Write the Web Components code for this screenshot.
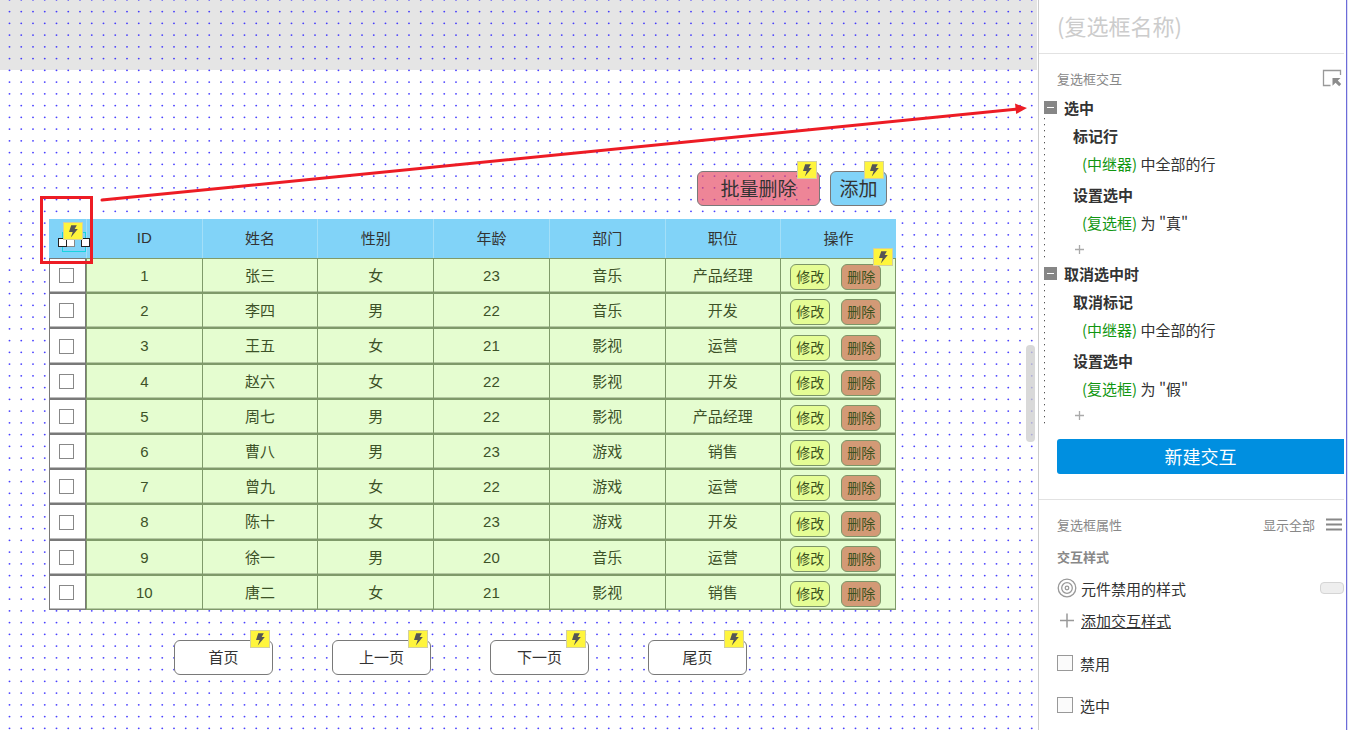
<!DOCTYPE html>
<html lang="zh-CN">
<head>
<meta charset="utf-8">
<title>复选框交互</title>
<style>
  body { margin: 0; background: #fff; color: #333; font-family: "Liberation Sans", "Noto Sans CJK SC", sans-serif; font-size: 15px; }
</style>
</head>
<body>
<proto-editor></proto-editor>
<script>
const define = (name, html, setup) => {
  const template = document.createElement('template');
  template.innerHTML = html;
  customElements.define(name, class extends HTMLElement {
    connectedCallback() {
      if (this.shadowRoot) return;
      this.attachShadow({ mode: 'open' }).append(template.content.cloneNode(true));
      if (setup) setup(this, this.shadowRoot);
    }
  });
};

define('bolt-badge', `
<style>
  :host { display: block; box-sizing: border-box; width: 20px; height: 18px; border: 1px solid #d3d0a0; background: #fff53d; }
  svg { display: block; width: 18px; height: 16px; }
</style>
<svg viewBox="0 0 18 16" aria-hidden="true"><path d="M7.200 2.200h5.600L10.700 6h3.100L6.800 14.500l1.900-5.600H5z" fill="#555"/></svg>`);

define('canvas-button', `
<style>
  :host { display: block; position: relative; width: 99px; height: 35px; }
  button { display: block; box-sizing: border-box; width: 100%; height: 100%; padding: 0 0 2px; border: 1px solid #797979; border-radius: 6px; background: #fff; color: #333; font: inherit; }
  bolt-badge { position: absolute; top: -10px; right: 3px; }
  :host([kind=danger]) { width: 123px; font-size: 19px; }
  :host([kind=danger]) button { background: #e5435fa6; }
  :host([kind=add]) { width: 57px; font-size: 19px; }
  :host([kind=add]) button { background: #81d3f8; }
</style>
<button type="button"><slot></slot></button><bolt-badge></bolt-badge>`);

define('row-button', `
<style>
  :host { display: block; width: 40px; height: 26px; }
  button { display: block; box-sizing: border-box; width: 100%; height: 100%; padding: 0; border: 1px solid #7d9668; border-radius: 6px; background: #e5fd95; color: #3c5220; font: inherit; font-size: 14px; line-height: 24px; }
  :host([kind=delete]) button { background: #d39a76; }
</style>
<button type="button"><slot></slot></button>`);

define('selected-checkbox', `
<style>
  :host { display: block; position: relative; width: 22px; height: 18px; border: 1px solid #19d3e0; }
  bolt-badge { position: absolute; left: 0; top: -11px; }
  input { appearance: none; position: absolute; left: 3px; top: 5px; margin: 0; box-sizing: border-box; width: 9px; height: 9px; border: 1px solid #888; background: #fff; }
  i { position: absolute; top: 5px; box-sizing: border-box; width: 9px; height: 9px; border: 1px solid #222; background: #fff; }
  .w { left: -5px; } .e { right: -5px; }
</style>
<input type="checkbox" aria-label="全选"><i class="w"></i><i class="e"></i><bolt-badge></bolt-badge>`);

define('staff-table', `
<style>
  :host { display: block; position: relative; }
  table { width: 100%; table-layout: fixed; border-collapse: separate; border-spacing: 0; }
  th, td { box-sizing: border-box; padding: 0; text-align: center; font-weight: normal; }
  th { height: 39px; padding-bottom: 2px; background: #81d3f8; border-left: 1px solid #a3dff8; }
  th:first-child { width: 37px; border-left: 0; padding: 0; }
  selected-checkbox { margin: 6px 0 0 13px; }
  td { height: 35px; background: #e5fdd0; color: #3d5228; border: 1px solid #7f9a6a; border-right-width: 0; line-height: 32px; box-shadow: inset 0 -1px #b5cba2; }
  tbody tr:nth-child(5n+3) td { height: 36px; }
  td:first-child { background: #fff; border-color: #797979; border-right: 1px solid #797979; box-shadow: inset 0 -1px #bbb; }
  td:last-child { border-right-width: 1px; }
  td input { appearance: none; display: block; box-sizing: border-box; width: 15px; height: 15px; margin: 0 0 0 9px; border: 1px solid #888; background: #fff; }
  .ops { display: flex; gap: 11px; padding: 3px 0 0 9px; }
  .rowmark { position: absolute; right: 3px; top: 29px; }
</style>
<table>
  <thead><tr><th><selected-checkbox></selected-checkbox></th><th>ID</th><th>姓名</th><th>性别</th><th>年龄</th><th>部门</th><th>职位</th><th>操作</th></tr></thead>
  <tbody></tbody>
</table>
<bolt-badge class="rowmark"></bolt-badge>`, (host, root) => {
  const rows = [
    ['1', '张三', '女', '23', '音乐', '产品经理'], ['2', '李四', '男', '22', '音乐', '开发'],
    ['3', '王五', '女', '21', '影视', '运营'], ['4', '赵六', '女', '22', '影视', '开发'],
    ['5', '周七', '男', '22', '影视', '产品经理'], ['6', '曹八', '男', '23', '游戏', '销售'],
    ['7', '曾九', '女', '22', '游戏', '运营'], ['8', '陈十', '女', '23', '游戏', '开发'],
    ['9', '徐一', '男', '20', '音乐', '运营'], ['10', '唐二', '女', '21', '影视', '销售']
  ];
  root.querySelector('tbody').innerHTML = rows.map(r => `<tr><td><input type="checkbox" aria-label="选择${r[1]}"></td>${r.map(c => `<td>${c}</td>`).join('')}<td><div class="ops"><row-button>修改</row-button><row-button kind="delete">删除</row-button></div></td></tr>`).join('');
});

define('design-canvas', `
<style>
  :host { display: block; position: relative; overflow: hidden; min-width: 0; }
  .dots { position: absolute; inset: 0; width: 100%; height: 100%; }
  .content { position: relative; }
  .offpage { height: 70px; }
  .shade { position: absolute; inset: 0 1px auto 0; height: 70px; background: #e5e5e5; }
  .work { padding: 101px 142px 0 49px; }
  .tools { display: flex; justify-content: flex-end; gap: 10px; padding: 0 9px 13px 0; }
  .pager { display: flex; gap: 59px; padding: 30px 0 0 125px; }
  .mark { position: absolute; left: 40px; top: 196px; box-sizing: border-box; width: 53px; height: 68px; border: 3px solid #ed1c24; }
  .arrow { position: absolute; left: 0; top: 0; width: 1038px; height: 220px; }
  .thumb { position: absolute; right: 3px; top: 345px; width: 9px; height: 97px; border-radius: 4px; background: #ccccccc0; }
</style>
<div class="shade"></div>
<svg class="dots" aria-hidden="true"><defs><pattern id="grid" x="3" y="6" width="47" height="47" patternUnits="userSpaceOnUse"></pattern></defs><rect width="100%" height="100%" fill="url(#grid)"/></svg>
<div class="content">
  <div class="offpage"></div>
  <div class="work">
    <div class="tools"><canvas-button kind="danger">批量删除</canvas-button><canvas-button kind="add">添加</canvas-button></div>
    <staff-table></staff-table>
    <div class="pager"><canvas-button>首页</canvas-button><canvas-button>上一页</canvas-button><canvas-button>下一页</canvas-button><canvas-button>尾页</canvas-button></div>
  </div>
</div>
<div class="mark"></div>
<svg class="arrow" viewBox="0 0 1038 220" aria-hidden="true"><path d="M102 200L1018 109" stroke="#ed1c24" stroke-width="3" stroke-linecap="round"/><path d="M1027 108L1015 103.500L1016.200 114z" fill="#ed1c24"/></svg>
<div class="thumb"></div>`, (host, root) => {
  const pattern = root.querySelector('pattern');
  const svg = 'http://www.w3.org/2000/svg';
  for (let row = 0; row < 4; row++) for (let col = 0; col < 4; col++) {
    const dot = document.createElementNS(svg, 'circle');
    dot.setAttribute('cx', 6.5 + col * 11.75);
    dot.setAttribute('cy', 5.6 + row * 11.75);
    dot.setAttribute('r', 0.95);
    dot.setAttribute('fill', '#2a20ff');
    dot.setAttribute('fill-opacity', 0.85);
    pattern.append(dot);
  }
});

define('event-case', `
<style>
  :host { display: block; position: relative; }
  .event { display: flex; align-items: center; height: 28px; gap: 7px; font-weight: bold; }
  .toggle { width: 13px; height: 13px; padding: 0; border: 0; background: #868686; display: grid; place-items: center; }
  .toggle i { width: 7px; height: 1px; background: #fff; }
  .rail { position: absolute; left: 0; top: 25px; bottom: -1px; width: 1px; background: repeating-linear-gradient(#555 0 1px, #ccc 1px 2px, transparent 2px 6px); }
  .add { display: block; height: 20px; width: 11px; margin-left: 30px; padding: 0; border: 0; background: none; }
  svg { display: block; width: 11px; height: 11px; }
</style>
<div class="event"><button class="toggle" type="button" aria-label="折叠"><i></i></button><slot name="event"></slot></div>
<div class="rail"></div>
<slot></slot>
<button class="add" type="button" aria-label="添加动作"><svg viewBox="0 0 11 11"><path d="M5.500 1v9M1 5.500h9" stroke="#aaa" stroke-width="1.300" fill="none"/></svg></button>`);

define('action-item', `
<style>
  :host { display: block; padding: 0 0 3px 29px; }
  .name { line-height: 30px; font-weight: bold; }
  .detail { line-height: 26px; padding-left: 9px; }
  ::slotted([slot=target]) { color: #119611; }
</style>
<div class="name"><slot name="name"></slot></div>
<div class="detail"><slot name="target"></slot> <slot></slot></div>`);

define('check-field', `
<style>
  :host { display: block; }
  label { display: flex; align-items: center; gap: 7px; height: 42px; }
  input { appearance: none; box-sizing: border-box; width: 16px; height: 16px; margin: 0; border: 1px solid #999; background: #fbfbfb; }
</style>
<label><input type="checkbox"><slot></slot></label>`);

define('inspector-panel', `
<style>
  :host { display: block; box-sizing: border-box; border-left: 1px solid #ccc; border-right: 1px solid #dcdcf6; box-shadow: inset -1px 0 #6c6cd8; padding-right: 3px; background: #fff; font-family: "Noto Sans CJK SC", sans-serif; }
  header { height: 53px; border-bottom: 1px solid #e2e2e2; }
  header input { display: block; box-sizing: border-box; width: 100%; height: 53px; padding: 0 0 4px 18px; border: 0; background: none; font: inherit; font-size: 22px; color: #333; }
  header input::placeholder { color: #ccc; opacity: 1; }
  .row { display: flex; align-items: center; justify-content: space-between; color: #888; font-size: 13px; padding: 0 2px 0 18px; }
  .first { height: 30px; padding-top: 9px; }
  .second { height: 48px; }
  .cases { padding-left: 5px; }
  .more { display: flex; align-items: center; gap: 11px; }
  svg { display: block; }
  .new { display: block; width: calc(100% - 18px); height: 35px; margin: 14px 0 25px 18px; padding: 0 0 2px; border: 0; border-radius: 3px 0 0 3px; background: #008fe0; color: #fff; font: inherit; font-size: 18px; }
  hr { height: 1px; margin: 0; border: 0; background: #e2e2e2; }
  h3 { margin: 0 0 6px 18px; font-size: 13px; line-height: 18px; color: #888; }
  .item { display: flex; align-items: center; gap: 4px; height: 32px; padding-left: 18px; }
  .item svg { flex: none; }
  .pill { box-sizing: border-box; width: 24px; height: 12px; margin-left: auto; padding: 0; border: 1px solid #d5d5d5; border-radius: 4px; background: #eee; }
  a { color: #333; text-decoration: underline; }
  .checks { padding: 6px 0 0 18px; }
</style>
<header><input type="text" placeholder="(复选框名称)" aria-label="名称"></header>
<div class="row first"><span>复选框交互</span><svg width="20" height="18" viewBox="0 0 20 18" fill="none" stroke="#999"><path d="M18.500 6V1.500H1.500v15H8.500" stroke-width="1.300"/><path d="M10.500 9h8l-2.700 2.500 3.400 3.600-2 2.200-3.700-3.600-3 3z" fill="#8c8c8c" stroke="none"/></svg></div>
<div class="cases">
  <event-case><span slot="event">选中</span>
    <action-item><span slot="name">标记行</span><span slot="target">(中继器)</span>中全部的行</action-item>
    <action-item><span slot="name">设置选中</span><span slot="target">(复选框)</span>为 "真"</action-item>
  </event-case>
  <event-case><span slot="event">取消选中时</span>
    <action-item><span slot="name">取消标记</span><span slot="target">(中继器)</span>中全部的行</action-item>
    <action-item><span slot="name">设置选中</span><span slot="target">(复选框)</span>为 "假"</action-item>
  </event-case>
</div>
<button class="new" type="button">新建交互</button>
<hr>
<div class="row second"><span>复选框属性</span><span class="more">显示全部<svg width="16" height="13" viewBox="0 0 16 13" stroke="#888" stroke-width="2"><path d="M0 1.500h16M0 6.500h16M0 11.500h16"/></svg></span></div>
<h3>交互样式</h3>
<div class="item"><svg width="20" height="20" viewBox="0 0 20 20" fill="none" stroke="#999" stroke-width="1.300"><circle cx="10" cy="10" r="8.800"/><circle cx="10" cy="10" r="5.300"/><circle cx="10" cy="10" r="1.800" /></svg><span>元件禁用的样式</span><button class="pill" type="button" aria-label="启用样式"></button></div>
<div class="item"><svg width="20" height="20" viewBox="0 0 20 20" stroke="#999" stroke-width="1.500"><path d="M10 3.500v14M3 10.500h14"/></svg><a href="#style">添加交互样式</a></div>
<div class="checks"><check-field>禁用</check-field><check-field>选中</check-field></div>`);

define('proto-editor', `
<style>
  :host { display: grid; grid-template-columns: minmax(0, 1fr) 310px; min-height: 100vh; }
</style>
<design-canvas></design-canvas><inspector-panel></inspector-panel>`);
</script>
</body>
</html>
